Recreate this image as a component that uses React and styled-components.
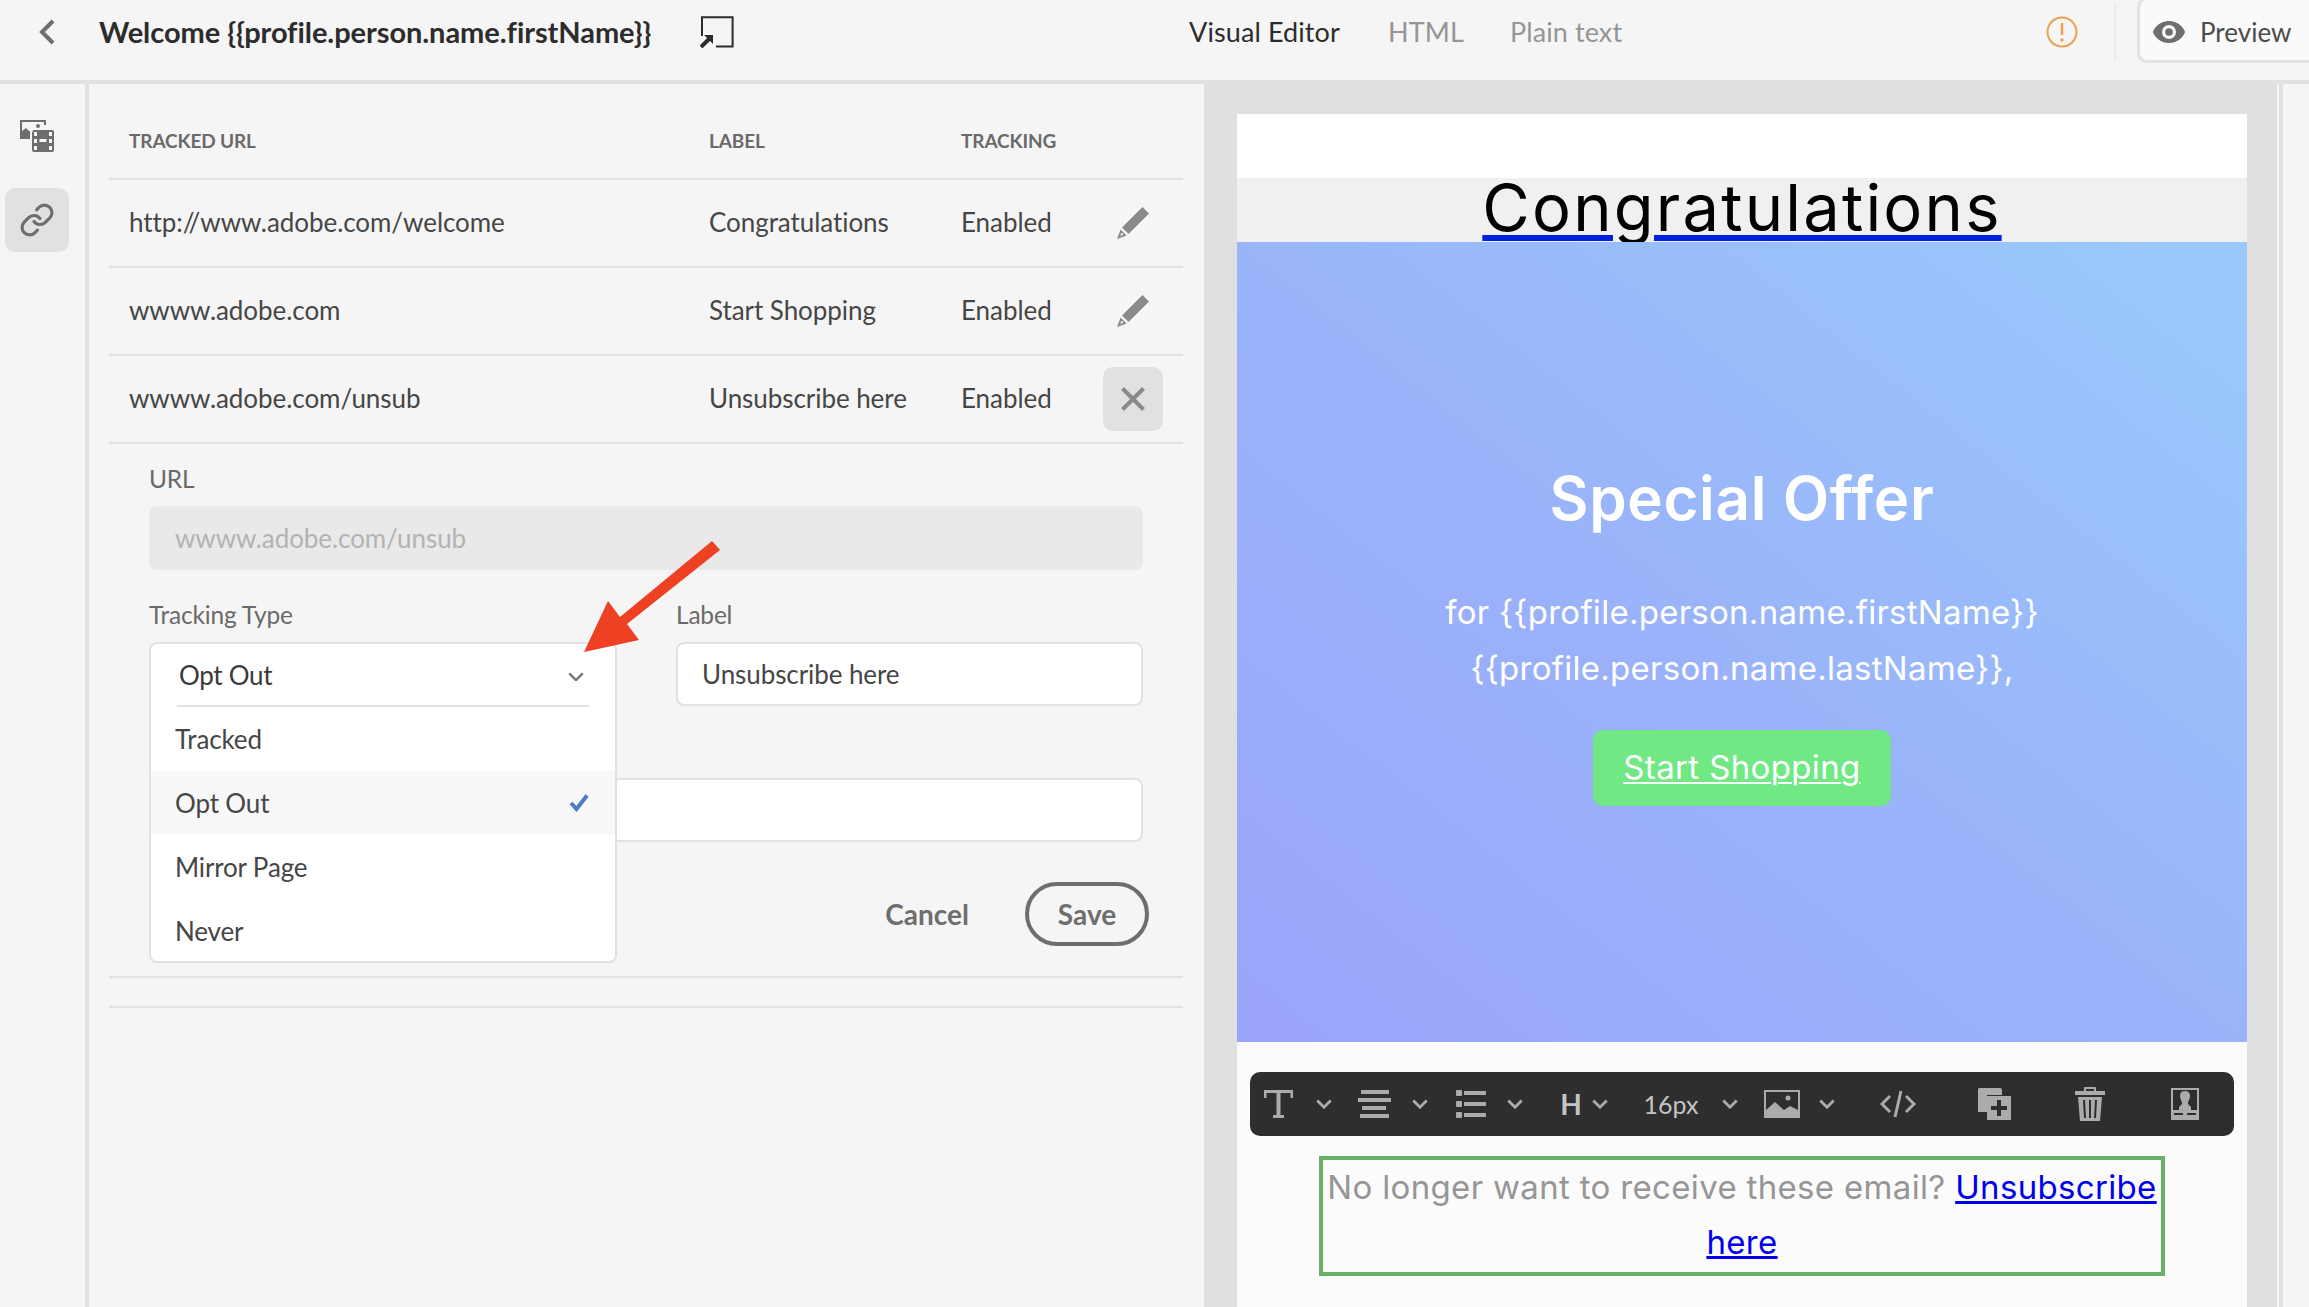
import React from "react";
import styled, { createGlobalStyle } from "styled-components";

const UI = `"Lato", "Open Sans", sans-serif`;
const MAIL = `"Inter", "Liberation Sans", sans-serif`;

const Global = createGlobalStyle`
  html, body { margin: 0; padding: 0; background: #f5f5f5; }
  * { box-sizing: border-box; }
`;

const Page = styled.div`
  position: relative;
  width: 2309px;
  height: 1307px;
  overflow: hidden;
  background: #f5f5f5;
  font-family: ${UI};
  color: #464646;
`;

const Header = styled.header`
  display: flex;
  height: 84px;
  border-bottom: 4px solid #e1e1e1;
  overflow: hidden;
`;
const TitleGroup = styled.div`
  width: 1185px;
  flex: none;
  display: flex;
  align-items: center;
  height: 64px;
  padding-left: 38px;
`;
const Title = styled.h1`
  margin: 0 0 0 43px;
  font: 700 29px/40px ${UI};
  letter-spacing: -0.06px;
  color: #2c2c2c;
  width: 601px;
  white-space: nowrap;
`;
const Tabs = styled.nav`
  width: 861px;
  flex: none;
  display: flex;
`;
const Tab = styled.div`
  position: relative;
  width: ${(p) => p.$w}px;
  height: 84px;
  padding: 12px 0 0 ${(p) => p.$pad}px;
  font: 400 27px/40px ${UI};
  letter-spacing: 0.1px;
  white-space: nowrap;
  color: ${(p) => (p.$active ? "#2c2c2c" : "#959595")};
  &::after {
    content: "";
    display: ${(p) => (p.$active ? "block" : "none")};
    position: absolute;
    left: 0;
    right: 0;
    top: 80px;
    height: 4px;
    background: #2c2c2c;
  }
`;
const HeaderRight = styled.div`
  flex: none;
  display: flex;
  align-items: flex-start;
`;
const WarnSlot = styled.div`
  width: 68px;
  height: 64px;
  display: flex;
  align-items: center;
`;
const Divider = styled.div`
  width: 2px;
  height: 56px;
  margin-top: 4px;
  background: #ebebeb;
`;
const PreviewBtn = styled.div`
  margin: -3px 0 0 21px;
  width: 190px;
  height: 66px;
  display: flex;
  align-items: center;
  gap: 15px;
  padding: 3px 0 0 13px;
  background: #fafafa;
  border: 3px solid #e1e1e1;
  border-radius: 10px;
  font: 400 26px/40px ${UI};
  color: #4b4b4b;
`;

const Body = styled.div`
  display: grid;
  grid-template-columns: 89px 1115px 1073px 1fr;
  height: 1223px;
`;
const Rail = styled.aside`
  border-right: 4px solid #e1e1e1;
  padding: 20px 0 0 5px;
  display: flex;
  flex-direction: column;
  gap: 20px;
`;
const RailTile = styled.div`
  width: 64px;
  height: 64px;
  border-radius: 10px;
  display: flex;
  align-items: center;
  justify-content: center;
  background: ${(p) => (p.$active ? "#e1e1e1" : "transparent")};
  color: #6e6e6e;
`;

const LeftPanel = styled.main`
  padding: 0 21px 0 20px;
`;
const Row = styled.div`
  display: grid;
  grid-template-columns: 580px 252px 142px 60px;
  align-items: center;
  height: ${(p) => p.$h}px;
  padding-left: 20px;
  border-bottom: 2px solid #e1e1e1;
`;
const HeadRow = styled(Row)`
  padding-top: 20px;
`;
const HeadCell = styled.div`
  font: 700 19px/24px ${UI};
  letter-spacing: -0.12px;
  color: #6a6a6a;
  text-transform: uppercase;
`;
const Cell = styled.div`
  font: 400 26px/36px ${UI};
  letter-spacing: -0.06px;
  color: #464646;
  white-space: nowrap;
  margin-top: -2px;
`;
const IconCell = styled.div`
  width: 60px;
  height: 64px;
  display: flex;
  align-items: center;
  justify-content: center;
  border-radius: 10px;
  background: ${(p) => (p.$active ? "#e1e1e1" : "transparent")};
`;

const Form = styled.section`
  padding: 20px 40px 30px;
  border-bottom: 2px solid #e1e1e1;
`;
const FieldLabel = styled.label`
  display: block;
  height: 30px;
  margin-bottom: 12px;
  font: 400 24.5px/30px ${UI};
  letter-spacing: -0.2px;
  color: #6a6a6a;
`;
const TextInput = styled.div`
  height: 64px;
  padding-left: ${(p) => (p.$disabled ? "26px" : "24px")};
  display: flex;
  align-items: center;
  border-radius: 8px;
  border: ${(p) => (p.$disabled ? "none" : "2px solid #e1e1e1")};
  background: ${(p) => (p.$disabled ? "#e9e9e9" : "#fff")};
  color: ${(p) => (p.$disabled ? "#b3b3b3" : "#464646")};
  font: 400 26px/36px ${UI};
  letter-spacing: -0.08px;
`;
const TwoCols = styled.div`
  display: grid;
  grid-template-columns: 467px 467px;
  column-gap: 60px;
  margin-top: 30px;
`;
const Field = styled.div`
  position: relative;
`;
const FullField = styled.div`
  margin-top: 30px;
`;
const Dropdown = styled.div`
  position: absolute;
  left: 0;
  top: 42px;
  width: 468px;
  height: 321px;
  background: #fff;
  border: 2px solid #e1e1e1;
  border-radius: 8px;
`;
const Trigger = styled.div`
  height: 63px;
  margin: 0 26px 0 26px;
  padding: 0 0 0 2px;
  border-bottom: 2px solid #e1e1e1;
  display: flex;
  align-items: center;
  justify-content: space-between;
  font: 400 26px/36px ${UI};
  letter-spacing: -0.32px;
  color: #3a3a3a;
`;
const Chevron = styled.span`
  display: flex;
  margin-right: 5px;
  margin-top: 4px;
`;
const Option = styled.div`
  height: 64px;
  padding: 0 26px 0 24px;
  display: flex;
  align-items: center;
  justify-content: space-between;
  background: ${(p) => (p.$selected ? "#f8f8f8" : "transparent")};
  font: 400 26px/36px ${UI};
  letter-spacing: -0.15px;
  color: #464646;
`;
const Actions = styled.div`
  display: flex;
  align-items: center;
  justify-content: flex-end;
  margin: 40px -6px 0 0;
`;
const CancelBtn = styled.div`
  font: 700 28px/40px ${UI};
  color: #6e6e6e;
  margin-right: 56px;
`;
const SaveBtn = styled.div`
  width: 124px;
  height: 64px;
  border: 4px solid #6e6e6e;
  border-radius: 32px;
  display: flex;
  align-items: center;
  justify-content: center;
  font: 700 28px/40px ${UI};
  color: #6e6e6e;
`;
const EmptyLine = styled.div`
  height: 30px;
  border-bottom: 2px solid #e1e1e1;
`;

const PreviewPane = styled.section`
  background: #e0e0e0;
  padding: 30px 30px 0 33px;
  overflow: hidden;
`;
const Sliver = styled.div`
  margin-left: 2px;
  border-left: 4px solid #e1e1e1;
`;
const Email = styled.article`
  width: 1010px;
  height: 1193px;
  background: #fbfbfb;
  font-family: ${MAIL};
`;
const TopWhite = styled.div`
  height: 64px;
  background: #fff;
`;
const HeadBand = styled.div`
  height: 64px;
  background: #f0f0f0;
  overflow: hidden;
  text-align: center;
`;
const HeadLink = styled.a`
  display: inline-block;
  font: 400 65px/64px ${MAIL};
  letter-spacing: 2.2px;
  color: #000;
  text-decoration: underline;
  text-decoration-color: #0020e0;
  text-decoration-thickness: 6px;
  text-underline-offset: 4px;
  margin-top: -2px;
`;
const Hero = styled.div`
  height: 800px;
  padding-top: 216px;
  background: linear-gradient(to top right, #9aa4fa 0%, #9ab4fa 50%, #99cafb 100%);
  display: flex;
  flex-direction: column;
  align-items: center;
  color: #fff;
`;
const HeroTitle = styled.h2`
  margin: 0;
  font: 600 60px/80px ${MAIL};
  letter-spacing: 0.7px;
`;
const HeroText = styled.p`
  margin: 46px 0 0;
  font: 400 33px/56px ${MAIL};
  letter-spacing: 0.27px;
  text-align: center;
`;
const CTA = styled.a`
  margin-top: 34px;
  width: 298px;
  height: 76px;
  padding-bottom: 2px;
  border-radius: 10px;
  background: #70e884;
  color: #fff;
  display: flex;
  align-items: center;
  justify-content: center;
  font: 400 33px/40px ${MAIL};
  letter-spacing: 0.36px;
  text-decoration: underline;
  text-decoration-thickness: 2px;
  text-underline-offset: 3px;
`;
const Footer = styled.div`
  padding: 30px 13px 0;
`;
const Toolbar = styled.div`
  display: flex;
  align-items: center;
  height: 64px;
  padding-left: 3px;
  border-radius: 10px;
  background: #2e2e2e;
  color: #ababab;
`;
const Slot = styled.div`
  flex: none;
  width: ${(p) => p.$w}px;
  margin-left: ${(p) => p.$ml || 0}px;
  display: flex;
  align-items: center;
  justify-content: center;
`;
const ToolText = styled.span`
  font: ${(p) => p.$weight} ${(p) => p.$size}px/40px ${UI};
  color: #c4c4c4;
`;
const Unsub = styled.div`
  margin: 20px 69px 0;
  height: 120px;
  border: 4px solid #69b069;
  text-align: center;
  font: 400 33px/55px ${MAIL};
  letter-spacing: 0.33px;
  color: #969696;
`;
const BlueLink = styled.a`
  color: #0000ee;
  text-decoration: underline;
  text-decoration-thickness: 2.5px;
`;
const Annotation = styled.svg`
  position: absolute;
  left: 0;
  top: 0;
  pointer-events: none;
`;

const Chev = ({ w = 16, color = "currentColor", sw = 3 }) => (
  <svg width={w} height={w * 0.6} viewBox="0 0 16 10" fill="none" stroke={color} strokeWidth={sw}>
    <path d="M1 1.5 8 8.5 15 1.5" />
  </svg>
);
const Pencil = () => (
  <svg width="32" height="32" viewBox="0 0 32 32">
    <path d="M25.5 0 32 6.5 11.5 27 5 20.5Z" fill="#8a8a8a" />
    <path fillRule="evenodd" d="M3.6 22.4 9.6 28.4 0 32ZM4.6 25.6 3.2 29 6.6 27.6Z" fill="#8a8a8a" />
  </svg>
);
const Close = () => (
  <svg width="24" height="24" viewBox="0 0 24 24" stroke="#8a8a8a" strokeWidth="4" fill="none">
    <path d="M1.5 1.5 22.5 22.5M22.5 1.5 1.5 22.5" />
  </svg>
);
const Media = () => (
  <svg width="34" height="32" viewBox="0 0 34 32" fill="#6e6e6e">
    <path d="M0 0H26V5H24V2H2V11L6 8 9 11H10V19H0Z" />
    <circle cx="18" cy="6" r="2" />
    <path fillRule="evenodd" d="M13 11Q12 10 14 10H32Q34 10 34 12V30Q34 32 32 32H14Q12 32 12 30V12ZM14 12V16H17V12ZM29 12V16H32V12ZM14 19V23H17V19ZM29 19V23H32V19ZM14 26V30H17V26ZM29 26V30H32V26ZM19.5 19V22H26.5V19Z" />
  </svg>
);
const LinkIcon = () => (
  <svg width="36" height="36" viewBox="0 0 24 24" fill="none" stroke="#6e6e6e" strokeWidth="2.1" strokeLinecap="round" strokeLinejoin="round">
    <path d="M10 13a5 5 0 0 0 7.54.54l3-3a5 5 0 0 0-7.07-7.07l-1.72 1.71" />
    <path d="M14 11a5 5 0 0 0-7.54-.54l-3 3a5 5 0 0 0 7.07 7.07l1.71-1.71" />
  </svg>
);
const BackIcon = () => (
  <svg width="18" height="26" viewBox="0 0 18 26" fill="none" stroke="#6e6e6e" strokeWidth="4">
    <path d="M15 2 4 13 15 24" />
  </svg>
);
const OpenIcon = () => (
  <svg width="34" height="32" viewBox="0 0 34 32" fill="none" stroke="#2c2c2c">
    <path d="M2 20V1.2H32.6V30.5H16" strokeWidth="2" />
    <path d="M1 31 10 22" strokeWidth="4" />
    <path d="M4 19H13V28Z" fill="#2c2c2c" stroke="none" />
  </svg>
);
const Warn = () => (
  <svg width="32" height="32" viewBox="0 0 32 32" fill="none">
    <circle cx="16" cy="16" r="14.5" stroke="#e68619" strokeOpacity=".75" strokeWidth="2" />
    <path d="M16 7V19" stroke="#e68619" strokeOpacity=".75" strokeWidth="2.5" />
    <circle cx="16" cy="24" r="1.8" fill="#e68619" fillOpacity=".75" />
  </svg>
);
const Eye = () => (
  <svg width="32" height="24" viewBox="0 0 32 24">
    <path fillRule="evenodd" fill="#6e6e6e" d="M16 1C24 1 30 6 32 12 30 18 24 23 16 23 8 23 2 18 0 12 2 6 8 1 16 1ZM16 5A7 7 0 1 0 16 19 7 7 0 1 0 16 5Z" />
    <circle cx="16" cy="12" r="3.8" fill="#6e6e6e" />
  </svg>
);
const Check = () => (
  <svg width="20" height="18" viewBox="0 0 20 18" fill="none" stroke="#4b7cc3" strokeWidth="4">
    <path d="M2 9 7.5 15 18 1.5" />
  </svg>
);
const TIcon = () => (
  <svg width="29" height="28" viewBox="0 0 29 28" fill="#ababab">
    <path d="M0 0H29V8H26.5V3H16.5V25H20V28H9V25H12.5V3H2.5V8H0Z" />
  </svg>
);
const AlignIcon = () => (
  <svg width="33" height="28" viewBox="0 0 33 28" fill="#ababab">
    <rect x="3" width="28" height="4" />
    <rect y="8" width="33" height="4" />
    <rect x="4" y="16" width="24" height="4" />
    <rect x="2" y="24" width="29" height="4" />
  </svg>
);
const ListIcon = () => (
  <svg width="30" height="28" viewBox="0 0 30 28" fill="#ababab">
    <rect width="6" height="6" y="0" rx="1" />
    <rect x="8" y="1" width="22" height="4" />
    <rect width="6" height="6" y="11" rx="1" />
    <rect x="8" y="12" width="22" height="4" />
    <rect width="6" height="6" y="22" rx="1" />
    <rect x="8" y="23" width="22" height="4" />
  </svg>
);
const ImageIcon = () => (
  <svg width="36" height="28" viewBox="0 0 36 28" fill="#ababab">
    <path fillRule="evenodd" d="M0 0H36V28H0ZM2 2V20L11 12 20 20 26 16 34 20V2Z" />
    <circle cx="24" cy="8" r="2.5" />
  </svg>
);
const CodeIcon = () => (
  <svg width="36" height="28" viewBox="0 0 36 28" fill="none" stroke="#ababab" strokeWidth="3">
    <path d="M10 6 2 14 10 22M26 6 34 14 26 22M21 1 15 27" />
  </svg>
);
const CopyIcon = () => (
  <svg width="33" height="32" viewBox="0 0 33 32">
    <path d="M1 0H22Q24 0 24 2V7H9V24H0V1Z" fill="#ababab" />
    <path fillRule="evenodd" fill="#ababab" d="M9 8H33V32H9ZM19 12V18H13V22H19V28H23V22H29V18H23V12Z" />
  </svg>
);
const TrashIcon = () => (
  <svg width="30" height="34" viewBox="0 0 30 34" fill="#ababab">
    <path fillRule="evenodd" d="M9 4V1Q9 0 10 0H20Q21 0 21 1V4H30V8H0V4ZM11 2V4H19V2Z" />
    <path fillRule="evenodd" d="M3 10H27L25 34H5ZM8 13 9 31H11L10 13ZM14 13V31H16V13ZM20 13 19 31H21L22 13Z" />
  </svg>
);
const PersonIcon = () => (
  <svg width="28" height="32" viewBox="0 0 28 32" fill="#ababab">
    <path fillRule="evenodd" d="M0 0H28V32H0ZM2 2V22H8V19L11 16V14Q9 11 9 8 9 3 14 3 19 3 19 8 19 11 17 14V16L20 19V22H26V2ZM3 25V27H12V25ZM16 25V27H25V25Z" />
  </svg>
);

const rows = [
  ["http://www.adobe.com/welcome", "Congratulations", "Enabled", false],
  ["wwww.adobe.com", "Start Shopping", "Enabled", false],
  ["wwww.adobe.com/unsub", "Unsubscribe here", "Enabled", true],
];

export default function App() {
  return (
    <Page>
      <Global />
      <Header>
        <TitleGroup>
          <BackIcon />
          <Title>Welcome {"{{profile.person.name.firstName}}"}</Title>
          <OpenIcon />
        </TitleGroup>
        <Tabs>
          <Tab $active $w={160} $pad={4}>Visual Editor</Tab>
          <Tab $w={165} $pad={43}>HTML</Tab>
          <Tab $w={200} $pad={0}>Plain text</Tab>
        </Tabs>
        <HeaderRight>
          <WarnSlot><Warn /></WarnSlot>
          <Divider />
          <PreviewBtn><Eye />Preview</PreviewBtn>
        </HeaderRight>
      </Header>
      <Body>
        <Rail>
          <RailTile><Media /></RailTile>
          <RailTile $active><LinkIcon /></RailTile>
        </Rail>
        <LeftPanel>
          <HeadRow $h={96}>
            <HeadCell>Tracked URL</HeadCell>
            <HeadCell>Label</HeadCell>
            <HeadCell>Tracking</HeadCell>
          </HeadRow>
          {rows.map(([url, label, state, open]) => (
            <Row $h={88} key={url}>
              <Cell>{url}</Cell>
              <Cell>{label}</Cell>
              <Cell>{state}</Cell>
              <IconCell $active={open}>{open ? <Close /> : <Pencil />}</IconCell>
            </Row>
          ))}
          <Form>
            <FieldLabel>URL</FieldLabel>
            <TextInput $disabled>wwww.adobe.com/unsub</TextInput>
            <TwoCols>
              <Field>
                <FieldLabel>Tracking Type</FieldLabel>
                <Dropdown>
                  <Trigger>
                    Opt Out
                    <Chevron><Chev w={16} color="#7a7a7a" sw={2.6} /></Chevron>
                  </Trigger>
                  <Option>Tracked</Option>
                  <Option $selected>Opt Out<Check /></Option>
                  <Option>Mirror Page</Option>
                  <Option>Never</Option>
                </Dropdown>
              </Field>
              <Field>
                <FieldLabel>Label</FieldLabel>
                <TextInput>Unsubscribe here</TextInput>
              </Field>
            </TwoCols>
            <FullField>
              <FieldLabel />
              <TextInput />
            </FullField>
            <Actions>
              <CancelBtn>Cancel</CancelBtn>
              <SaveBtn>Save</SaveBtn>
            </Actions>
          </Form>
          <EmptyLine />
        </LeftPanel>
        <PreviewPane>
          <Email>
            <TopWhite />
            <HeadBand><HeadLink>Congratulations</HeadLink></HeadBand>
            <Hero>
              <HeroTitle>Special Offer</HeroTitle>
              <HeroText>
                for {"{{profile.person.name.firstName}}"}
                <br />
                {"{{profile.person.name.lastName}},"}
              </HeroText>
              <CTA>Start Shopping</CTA>
            </Hero>
            <Footer>
              <Toolbar>
                <Slot $w={50}><TIcon /></Slot>
                <Slot $w={42}><Chev /></Slot>
                <Slot $w={58}><AlignIcon /></Slot>
                <Slot $w={34}><Chev /></Slot>
                <Slot $w={68}><ListIcon /></Slot>
                <Slot $w={20}><Chev /></Slot>
                <Slot $w={38} $ml={27}><ToolText $size={28} $weight={700}>H</ToolText></Slot>
                <Slot $w={20}><Chev /></Slot>
                <Slot $w={80} $ml={21}><ToolText $size={25} $weight={400}>16px</ToolText></Slot>
                <Slot $w={38}><Chev /></Slot>
                <Slot $w={66}><ImageIcon /></Slot>
                <Slot $w={24}><Chev /></Slot>
                <Slot $w={118}><CodeIcon /></Slot>
                <Slot $w={74}><CopyIcon /></Slot>
                <Slot $w={118}><TrashIcon /></Slot>
                <Slot $w={72}><PersonIcon /></Slot>
              </Toolbar>
              <Unsub>
                No longer want to receive these email? <BlueLink>Unsubscribe</BlueLink>{" "}
                <BlueLink>here</BlueLink>
              </Unsub>
            </Footer>
          </Email>
        </PreviewPane>
        <Sliver />
      </Body>
      <Annotation width="2309" height="1307" viewBox="0 0 2309 1307">
        <polygon fill="#ee4023" points="712,541 720,550 627,624 639,640 584,652 608,601 620,617" />
      </Annotation>
    </Page>
  );
}
